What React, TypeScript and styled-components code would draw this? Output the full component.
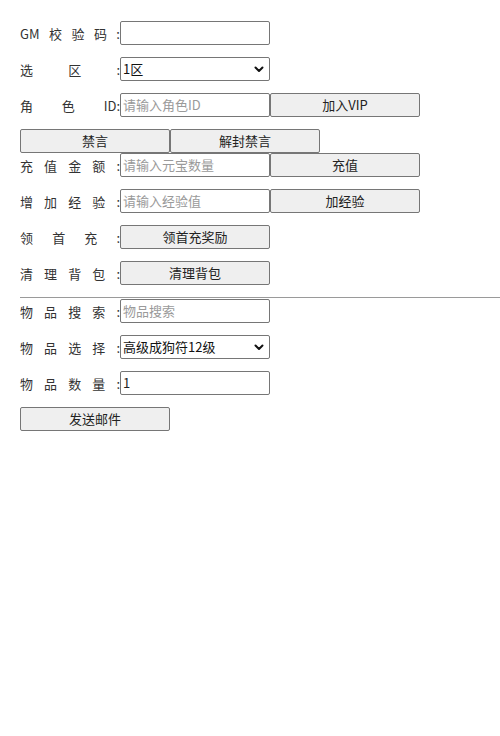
import React, { useState } from "react";
import styled, { createGlobalStyle } from "styled-components";

const GlobalStyle = createGlobalStyle`
  html, body {
    margin: 0;
    padding: 0;
    background: #ffffff;
  }
  body {
    font-family: "Noto Sans CJK SC", "Noto Sans", sans-serif;
    font-size: 13px;
    color: #333333;
  }
`;

const Page = styled.div`
  padding: 21px 0 0 20px;
  width: 480px;
`;

const Row = styled.div<{ $tight?: boolean }>`
  display: flex;
  align-items: center;
  height: 24px;
  margin-bottom: ${(p) => (p.$tight ? "0" : "12px")};
`;

const Label = styled.label`
  display: inline-block;
  width: 100px;
  text-align: justify;
  text-align-last: justify;
  text-justify: inter-character;
  white-space: nowrap;
  font-size: 13px;
  line-height: 23px;
  color: #333333;
`;

const Field = styled.input`
  box-sizing: border-box;
  width: 150px;
  height: 24px;
  margin: 0;
  padding: 0 2px 1px;
  border: 1px solid #767676;
  border-radius: 2px;
  font-family: inherit;
  font-size: 13px;
  color: #222222;
  background: #ffffff;
  outline: none;

  &::placeholder {
    color: #9a9a9a;
  }
`;

const SelectWrap = styled.div`
  position: relative;
  width: 150px;
  height: 24px;
`;

const Select = styled.select`
  box-sizing: border-box;
  width: 100%;
  height: 100%;
  margin: 0;
  padding: 0 24px 1px 2px;
  border: 1px solid #767676;
  border-radius: 2px;
  appearance: none;
  -webkit-appearance: none;
  background: #ffffff;
  font-family: inherit;
  font-size: 13px;
  color: #111111;
  outline: none;
`;

const Chevron = styled.svg`
  position: absolute;
  right: 6px;
  top: 9px;
  width: 10px;
  height: 7px;
  pointer-events: none;
`;

const Button = styled.button`
  box-sizing: border-box;
  width: 150px;
  height: 24px;
  margin: 0;
  padding: 0 0 1px;
  border: 1px solid #767676;
  border-radius: 2px;
  background: #efefef;
  font-family: inherit;
  font-size: 13px;
  color: #222222;
  cursor: pointer;
`;

const Divider = styled.div`
  height: 0;
  border-top: 1px solid #9a9a9a;
  margin: 0 0 1px 0;
`;

const Dropdown = ({ value, options, onChange }: { value: string; options: string[]; onChange: (v: string) => void }) => (
  <SelectWrap>
    <Select value={value} onChange={(e) => onChange(e.target.value)}>
      {options.map((o) => (
        <option key={o} value={o}>
          {o}
        </option>
      ))}
    </Select>
    <Chevron viewBox="0 0 10 7">
      <path d="M1.5 1.5 L5 5 L8.5 1.5" fill="none" stroke="#111" strokeWidth="2" strokeLinecap="round" strokeLinejoin="round" />
    </Chevron>
  </SelectWrap>
);

export default function App() {
  const [zone, setZone] = useState("1区");
  const [item, setItem] = useState("高级成狗符12级");

  return (
    <Page>
      <GlobalStyle />
      <Row>
        <Label>GM校验码:</Label>
        <Field />
      </Row>
      <Row>
        <Label>选区:</Label>
        <Dropdown value={zone} options={["1区", "2区", "3区"]} onChange={setZone} />
      </Row>
      <Row>
        <Label>角色ID:</Label>
        <Field placeholder="请输入角色ID" />
        <Button>加入VIP</Button>
      </Row>
      <Row $tight>
        <Button>禁言</Button>
        <Button>解封禁言</Button>
      </Row>
      <Row>
        <Label>充值金额:</Label>
        <Field placeholder="请输入元宝数量" />
        <Button>充值</Button>
      </Row>
      <Row>
        <Label>增加经验:</Label>
        <Field placeholder="请输入经验值" />
        <Button>加经验</Button>
      </Row>
      <Row>
        <Label>领首充:</Label>
        <Button>领首充奖励</Button>
      </Row>
      <Row>
        <Label>清理背包:</Label>
        <Button>清理背包</Button>
      </Row>
      <Divider />
      <Row>
        <Label>物品搜索:</Label>
        <Field placeholder="物品搜索" />
      </Row>
      <Row>
        <Label>物品选择:</Label>
        <Dropdown value={item} options={["高级成狗符12级", "高级成狗符11级", "高级成狗符10级"]} onChange={setItem} />
      </Row>
      <Row>
        <Label>物品数量:</Label>
        <Field defaultValue="1" />
      </Row>
      <Row>
        <Button>发送邮件</Button>
      </Row>
    </Page>
  );
}
